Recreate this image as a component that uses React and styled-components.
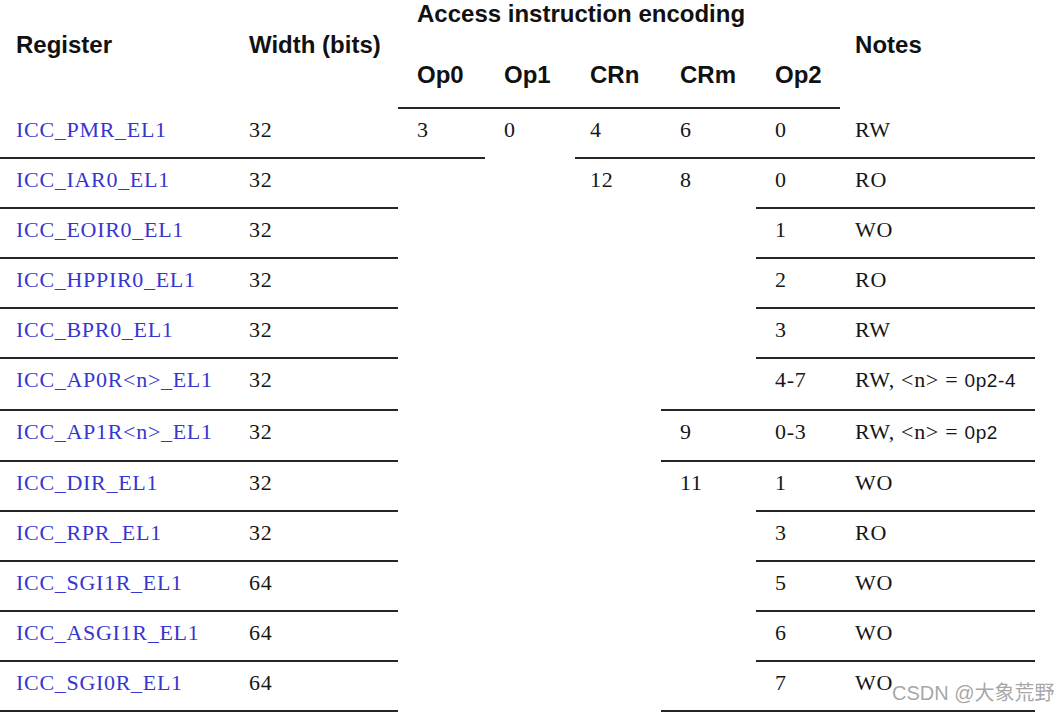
import React from "react";
import styled, { createGlobalStyle } from "styled-components";

const Global = createGlobalStyle`
  html, body {
    margin: 0;
    padding: 0;
    background: #ffffff;
  }
`;

const Page = styled.div`
  position: relative;
  width: 1056px;
  height: 716px;
  overflow: hidden;
  background: #fff;
`;

const Table = styled.table`
  table-layout: fixed;
  width: 1035px;
  border-collapse: separate;
  border-spacing: 0;
`;

const HeadCell = styled.th`
  vertical-align: top;
  text-align: left;
  padding: 31px 0 0 ${(p) => p.$pad}px;
  font-family: "Liberation Sans", Arial, sans-serif;
  font-weight: bold;
  font-size: 24px;
  line-height: 28px;
  color: #111;
  white-space: nowrap;
`;

const GroupCell = styled.th`
  text-align: left;
  height: 28px;
  padding: 0 0 0 19px;
  font-family: "Liberation Sans", Arial, sans-serif;
  font-weight: bold;
  font-size: 24px;
  line-height: 28px;
  color: #111;
  white-space: nowrap;
`;

const SubCell = styled.th`
  text-align: left;
  padding: 33px 0 18px ${(p) => p.$pad}px;
  font-family: "Liberation Sans", Arial, sans-serif;
  font-weight: bold;
  font-size: 24px;
  line-height: 28px;
  color: #111;
  border-bottom: 2px solid #262626;
`;

const Cell = styled.td`
  vertical-align: top;
  padding: 9px 0 15.1px ${(p) => p.$pad}px;
  font-family: "Liberation Serif", "Times New Roman", serif;
  font-size: 22px;
  line-height: 24px;
  letter-spacing: 0.7px;
  color: ${(p) => (p.$link ? "#3636d0" : "#161616")};
  white-space: nowrap;
  border-bottom: 2px solid ${(p) => (p.$line ? "#262626" : "transparent")};
`;

const Mono = styled.span`
  font-family: "Liberation Sans", Arial, sans-serif;
  font-size: 19px;
  letter-spacing: 0.6px;
`;

const Watermark = styled.div`
  position: absolute;
  left: 892px;
  top: 681px;
  font-family: "Liberation Sans", "Noto Sans CJK SC", sans-serif;
  font-size: 20px;
  line-height: 24px;
  color: rgba(150, 150, 150, 0.85);
  white-space: nowrap;
`;

const widths = [233, 165, 87, 90, 86, 95, 84, 195];
const pads = [16, 16, 19, 19, 15, 19, 19, 15];

const A = [1, 1, 0, 0, 0, 0, 1, 1];
const B = [1, 1, 0, 0, 0, 1, 1, 1];

const rows = [
  { c: ["ICC_PMR_EL1", "32", "3", "0", "4", "6", "0", "RW"], l: [1, 1, 1, 0, 1, 1, 1, 1] },
  { c: ["ICC_IAR0_EL1", "32", "", "", "12", "8", "0", "RO"], l: A },
  { c: ["ICC_EOIR0_EL1", "32", "", "", "", "", "1", "WO"], l: A },
  { c: ["ICC_HPPIR0_EL1", "32", "", "", "", "", "2", "RO"], l: A },
  { c: ["ICC_BPR0_EL1", "32", "", "", "", "", "3", "RW"], l: A },
  { c: ["ICC_AP0R<n>_EL1", "32", "", "", "", "", "4-7", "ap0"], l: B },
  { c: ["ICC_AP1R<n>_EL1", "32", "", "", "", "9", "0-3", "ap1"], l: B },
  { c: ["ICC_DIR_EL1", "32", "", "", "", "11", "1", "WO"], l: A },
  { c: ["ICC_RPR_EL1", "32", "", "", "", "", "3", "RO"], l: A },
  { c: ["ICC_SGI1R_EL1", "64", "", "", "", "", "5", "WO"], l: A },
  { c: ["ICC_ASGI1R_EL1", "64", "", "", "", "", "6", "WO"], l: A },
  { c: ["ICC_SGI0R_EL1", "64", "", "", "", "", "7", "WO"], l: B },
];

const note = (v) => {
  if (v === "ap0") return <>RW, &lt;n&gt; = <Mono>0p2-4</Mono></>;
  if (v === "ap1") return <>RW, &lt;n&gt; = <Mono>0p2</Mono></>;
  return v;
};

export default function App() {
  return (
    <Page>
      <Global />
      <Table>
        <colgroup>
          {widths.map((w, i) => (
            <col key={i} style={{ width: w }} />
          ))}
        </colgroup>
        <thead>
          <tr>
            <HeadCell rowSpan={2} $pad={16}>Register</HeadCell>
            <HeadCell rowSpan={2} $pad={16}>Width (bits)</HeadCell>
            <GroupCell colSpan={5}>Access instruction encoding</GroupCell>
            <HeadCell rowSpan={2} $pad={15}>Notes</HeadCell>
          </tr>
          <tr>
            {["Op0", "Op1", "CRn", "CRm", "Op2"].map((h, i) => (
              <SubCell key={h} $pad={pads[i + 2]}>{h}</SubCell>
            ))}
          </tr>
        </thead>
        <tbody>
          {rows.map((r, ri) => (
            <tr key={ri}>
              {r.c.map((v, ci) => (
                <Cell key={ci} $pad={pads[ci]} $line={r.l[ci]} $link={ci === 0}>
                  {ci === 7 ? note(v) : v}
                </Cell>
              ))}
            </tr>
          ))}
        </tbody>
      </Table>
      <Watermark>CSDN @大象荒野</Watermark>
    </Page>
  );
}
